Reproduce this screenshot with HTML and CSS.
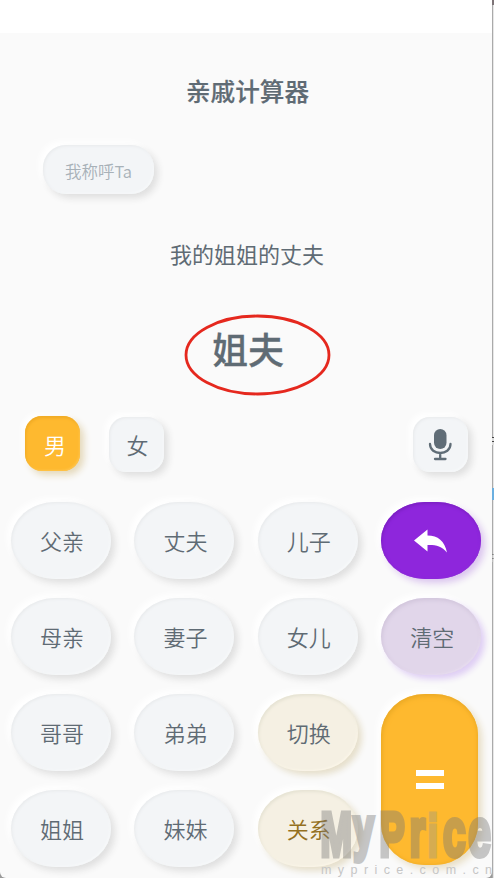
FILE: index.html
```html
<!DOCTYPE html>
<html lang="zh-CN">
<head>
<meta charset="utf-8">
<title>亲戚计算器</title>
<link rel="stylesheet" href="styles.css">
</head>
<body>
<div class="desk">
<main class="phone">
  <div class="statusbar"></div>
  <h1 class="title">亲戚计算器</h1>
  <button class="soft mode">我称呼Ta</button>
  <p class="query">我的姐姐的丈夫</p>
  <div class="answer"><strong>姐夫</strong>
    <svg class="ring" viewBox="0 0 148 84"><ellipse cx="73.5" cy="42" rx="71.5" ry="39"/></svg>
  </div>
  <div class="tools">
    <button class="soft square selected">男</button>
    <button class="soft square">女</button>
    <button class="soft square mic" aria-label="语音">
      <svg width="24" height="32" viewBox="0 0 24 32"><rect x="6" y="0" width="12.5" height="20" rx="6.25" fill="#606d77"/><path d="M2 15C2 27 22.5 27 22.5 15M12.2 24V30M7 30H17.5" fill="none" stroke="#606d77" stroke-width="2.3" stroke-linecap="round"/></svg>
    </button>
  </div>
  <div class="keys">
    <button class="soft key">父亲</button>
    <button class="soft key">丈夫</button>
    <button class="soft key">儿子</button>
    <button class="soft key back" aria-label="返回">
      <svg width="34" height="24" viewBox="0 0 34 24"><path d="M0 11.5 13.5.5V6.5C24 6.5 30.5 12 33 23.5C27.5 17 21.5 15.7 13.5 16V22.5Z" fill="#fff"/></svg>
    </button>
    <button class="soft key">母亲</button>
    <button class="soft key">妻子</button>
    <button class="soft key">女儿</button>
    <button class="soft key clear">清空</button>
    <button class="soft key">哥哥</button>
    <button class="soft key">弟弟</button>
    <button class="soft key cream">切换</button>
    <button class="soft key equals" aria-label="等于"><span class="bars"></span></button>
    <button class="soft key">姐姐</button>
    <button class="soft key">妹妹</button>
    <button class="soft key cream relation">关系</button>
  </div>
</main>
<aside class="edge"><i class="dot"></i><i class="tick"></i><i class="blue"></i><i class="tick low"></i></aside>
<svg class="watermark" viewBox="0 0 174 72">
  <g class="brand"><text transform="scale(.6 1)" y="49.5"><tspan x="1">M</tspan><tspan x="56" y="43" class="tail">y</tspan><tspan x="99" y="49.5">P</tspan><tspan x="149" class="small">r</tspan><tspan x="180" class="light">i</tspan><tspan x="205" class="small">c</tspan><tspan x="247" class="small">e</tspan></text></g>
  <text class="url" x="1" y="68" textLength="171">myprice.com.cn</text>
</svg>
</div>
</body>
</html>
```
FILE: styles.css
```css
* { box-sizing: border-box; }
body {
  margin: 0;
  color: #5f6b74;
  background: #999;
  font-family: "Noto Sans CJK SC", sans-serif;
}
.desk {
  position: relative;
  display: flex;
  width: 494px;
  height: 878px;
  overflow: hidden;
}
.phone {
  display: flex;
  flex-direction: column;
  width: 492px;
  height: 878px;
  background: #fafafa;
  border-radius: 0 0 6px 6px;
  overflow: hidden;
}
.statusbar { flex: 0 0 33px; background: #fff; }
.title {
  margin: 37px 0 0;
  padding-left: 3px;
  height: 40px;
  font-size: 24.6px;
  line-height: 40px;
  font-weight: 500;
  text-align: center;
  -webkit-text-stroke: .2px #5f6b74;
}
.soft {
  display: flex;
  align-items: center;
  justify-content: center;
  padding: 0;
  border: 0;
  color: inherit;
  font: 350 22px/32px "Noto Sans CJK SC", sans-serif;
  background: #f3f5f7;
  box-shadow: 4px 4px 7px #dfdfdf, -4px -4px 6px #fff, inset 1px 1px 3px #e8eaec, inset -1px -1px 2px #f8fafb;
}
.mode {
  width: 111px;
  height: 49px;
  margin: 35px 0 0 43px;
  padding-top: 3px;
  border-radius: 23px;
  color: #a8b1b8;
  font-size: 16.5px;
}
.query {
  margin: 41px 0 0;
  padding-left: 2px;
  height: 36px;
  font-size: 22px;
  line-height: 36px;
  text-align: center;
}
.answer {
  position: relative;
  height: 84px;
  margin-top: 42px;
  padding-left: 4px;
  text-align: center;
}
.answer strong {
  font-size: 36px;
  line-height: 70px;
  font-weight: 500;
  -webkit-text-stroke: .3px #5f6b74;
}
.ring {
  position: absolute;
  left: 184px;
  top: 0;
  width: 148px;
  height: 84px;
  fill: none;
  stroke: #e5281e;
  stroke-width: 2.8;
}
.tools {
  display: flex;
  align-items: flex-end;
  gap: 29px;
  height: 58px;
  margin: 18px 24px 0 25px;
}
.square {
  width: 55px;
  height: 55px;
  margin-bottom: 1px;
  padding: 0 0 1px 2px;
  border-radius: 17px;
}
.selected {
  align-self: flex-start;
  margin-top: 1px;
  padding: 1px 0 0 5px;
  color: #fff;
  background: #feb92f;
  box-shadow: 4px 4px 7px #e5d9bb, -3px -3px 6px #fff, inset 1px 2px 3px #f0ab25, inset -1px -1px 2px #ffc54e;
}
.mic { margin-left: auto; padding: 0 2px 0 0; }
.keys {
  display: grid;
  grid-template-columns: repeat(4, 100px);
  grid-template-rows: repeat(4, 77px);
  gap: 19px 23.4px;
  margin: 29px 0 0 11px;
}
.key {
  border-radius: 44px / 38.5px;
  padding: 0 0 2px 2px;
}
.back {
  padding: 0;
  background: #8e26dc;
  box-shadow: 4px 4px 7px #dac4ee, -4px -4px 6px #fff, inset 1px 2px 3px #7d20c4, inset -1px -1px 2px #8e2bdb;
}
.clear {
  background: #e1d6ea;
  box-shadow: 4px 4px 6px #decdf4, -4px -4px 6px #fff, inset 1px 2px 4px #d0c4da, inset -1px -1px 2px #eadff2;
}
.cream {
  background: #f5f0e3;
  box-shadow: 4px 4px 6px #e6dfcb, -4px -4px 6px #fff, inset 1px 2px 3px #e6e3d4, inset -1px -1px 2px #fbf6e9;
}
.relation { color: #94701f; }
.equals {
  grid-column: 4;
  grid-row: 3 / 5;
  width: 97px;
  height: 171px;
  padding: 0;
  border-radius: 44px / 41px;
  background: #feb92f;
  box-shadow: 4px 4px 7px #e8dec5, -4px -4px 6px #fff, inset 1px 2px 5px #e9a825, inset -1px -1px 3px #f7b32c;
}
.bars {
  width: 28px;
  height: 19px;
  border: solid #fff;
  border-width: 6px 0;
  margin-top: 0;
}
.edge {
  display: flex;
  flex-direction: column;
  width: 2px;
  background: linear-gradient(90deg, #aaa 50%, #e7e7e7 50%);
}
.edge i { display: block; height: 8px; }
.edge .dot { height: 5px; background: #7d7477; }
.edge .tick { margin-top: 432px; background: repeating-linear-gradient(#444 0 1px, #ddd 1px 4px); }
.edge .blue { height: 12px; margin-top: 43px; background: #6bafe0; }
.edge .low { margin-top: 54px; opacity: .4; }
.watermark {
  position: absolute;
  left: 320px;
  top: 806px;
  width: 174px;
  height: 72px;
  overflow: visible;
  pointer-events: none;
}
.brand {
  font: bold 63px "Liberation Sans", sans-serif;
  fill: #777;
  stroke: #777;
  stroke-width: 5;
  opacity: .4;
}
.brand .tail { font-size: 60px; stroke-width: 6; }
.brand .small { font-size: 68px; }
.brand .light { font-size: 58px; fill: #9a9a84; stroke: #9a9a84; }
.url {
  font: 12.5px "Liberation Sans", sans-serif;
  fill: #c6c6c6;
}
```
